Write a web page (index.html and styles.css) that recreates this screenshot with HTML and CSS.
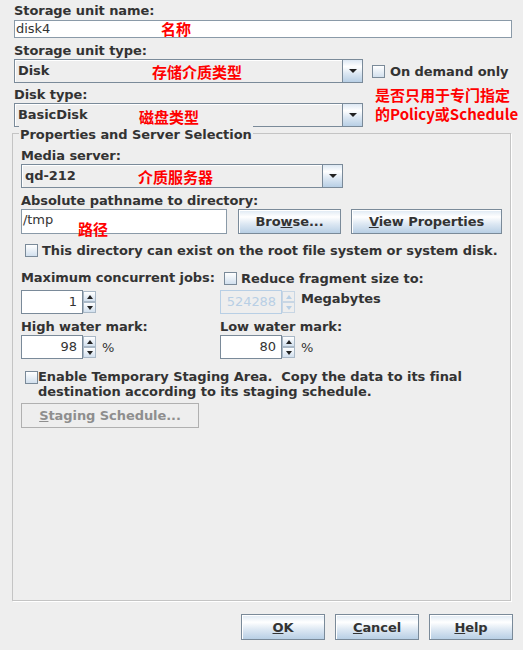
FILE: index.html
```html
<!DOCTYPE html>
<html lang="en">

<head>
    <meta charset="UTF-8">
    <meta name="viewport" content="width=device-width, initial-scale=1.0">
    <title>Storage Unit</title>
    <link rel="stylesheet" href="styles.css">
</head>

<body>
    <div class="dialog">
        <div class="field-label first-label">Storage unit name:</div>
        <div class="text-field name-field">disk4</div>

        <div class="field-label gap-5">Storage unit type:</div>
        <div class="combo-row">
            <div class="combo combo-wide">
                <span class="combo-value">Disk</span>
                <span class="combo-arrow"></span>
            </div>
            <div class="check demand-check"><span class="box"></span>On demand only</div>
        </div>

        <div class="field-label gap-4">Disk type:</div>
        <div class="combo combo-wide">
            <span class="combo-value">BasicDisk</span>
            <span class="combo-arrow"></span>
        </div>

        <fieldset class="group">
            <legend>Properties and Server Selection</legend>

            <div class="field-label gap-5">Media server:</div>
            <div class="combo combo-media">
                <span class="combo-value">qd-212</span>
                <span class="combo-arrow"></span>
            </div>

            <div class="field-label gap-5">Absolute pathname to directory:</div>
            <div class="path-row">
                <div class="text-field path-field">/tmp</div>
                <button class="btn browse-btn">Bro<u>w</u>se...</button>
                <button class="btn view-btn"><u>V</u>iew Properties</button>
            </div>

            <div class="check root-check"><span class="box"></span>This directory can exist on the root file system or system disk.</div>

            <div class="limits">
                <div class="field-label">Maximum concurrent jobs:</div>
                <div class="check reduce-check"><span class="box"></span>Reduce fragment size to:</div>

                <div class="spin-row">
                    <div class="spinner">
                        <div class="spin-field">1</div>
                        <div class="spin-buttons">
                            <span class="spin-btn up"></span>
                            <span class="spin-btn down"></span>
                        </div>
                    </div>
                </div>
                <div class="spin-row">
                    <div class="spinner disabled">
                        <div class="spin-field">524288</div>
                        <div class="spin-buttons">
                            <span class="spin-btn up"></span>
                            <span class="spin-btn down"></span>
                        </div>
                    </div>
                    <span class="unit unit-top">Megabytes</span>
                </div>

                <div class="field-label water-label">High water mark:</div>
                <div class="field-label water-label">Low water mark:</div>

                <div class="spin-row">
                    <div class="spinner">
                        <div class="spin-field">98</div>
                        <div class="spin-buttons">
                            <span class="spin-btn up"></span>
                            <span class="spin-btn down"></span>
                        </div>
                    </div>
                    <span class="unit">%</span>
                </div>
                <div class="spin-row">
                    <div class="spinner">
                        <div class="spin-field">80</div>
                        <div class="spin-buttons">
                            <span class="spin-btn up"></span>
                            <span class="spin-btn down"></span>
                        </div>
                    </div>
                    <span class="unit">%</span>
                </div>
            </div>

            <div class="staging-row">
                <span class="box"></span>
                <span class="staging-text">Enable Temporary Staging Area.&nbsp; Copy the data to its final<br>destination according to its staging schedule.</span>
            </div>
            <button class="btn staging-btn" disabled><u>S</u>taging Schedule...</button>
        </fieldset>

        <div class="button-bar">
            <button class="btn bar-btn"><u>O</u>K</button>
            <button class="btn bar-btn"><u>C</u>ancel</button>
            <button class="btn bar-btn"><u>H</u>elp</button>
        </div>

        <div class="note note-name">名称</div>
        <div class="note note-type">存储介质类型</div>
        <div class="note note-demand">是否只用于专门指定</div>
        <div class="note note-policy">的Policy或Schedule</div>
        <div class="note note-disk">磁盘类型</div>
        <div class="note note-media">介质服务器</div>
        <div class="note note-path">路径</div>
    </div>
</body>

</html>
```

FILE: styles.css
```css
* {
    box-sizing: border-box;
}

body {
    margin: 0;
    background-color: #eeeeee;
    font-family: "DejaVu Sans", sans-serif;
    font-size: 13px;
    letter-spacing: -0.07px;
    color: #333333;
}

.dialog {
    position: relative;
    height: 650px;
    display: flex;
    flex-direction: column;
    padding: 0 0 10px 14px;
}

.field-label {
    font-weight: bold;
    height: 16px;
    line-height: 16px;
    white-space: nowrap;
}

.first-label {
    margin-top: 3px;
}

.gap-4 {
    margin-top: 4px;
}

.gap-5 {
    margin-top: 5px;
}

.text-field {
    background-color: #ffffff;
    border: 1px solid #8a9aa8;
    padding-left: 1px;
}

.name-field {
    width: 498px;
    height: 18px;
    line-height: 16px;
    margin-top: 1px;
}

/* combo boxes */
.combo {
    display: flex;
    height: 24px;
    border: 1px solid #7a8a99;
    background-color: #eeeeee;
}

.combo-wide {
    width: 349px;
}

.combo-media {
    width: 322px;
}

.combo-value {
    flex: 1;
    font-weight: bold;
    line-height: 22px;
    padding-left: 3px;
    box-shadow: inset 1px 1px 0 #ffffff;
}

.combo-arrow {
    width: 20px;
    border-left: 1px solid #7a8a99;
    background: linear-gradient(#dde8f3 0%, #ffffff 30%, #dde8f3 60%, #b8cfe5 100%);
    display: flex;
    align-items: center;
    justify-content: center;
}

.combo-arrow::before {
    content: "";
    border-left: 4px solid transparent;
    border-right: 4px solid transparent;
    border-top: 4px solid #222222;
}

.combo-row {
    display: flex;
    align-items: center;
}

/* check boxes */
.check {
    display: flex;
    align-items: center;
    gap: 4px;
    font-weight: bold;
    height: 16px;
    white-space: nowrap;
}

.box {
    flex: none;
    width: 13px;
    height: 13px;
    border: 1px solid #7a8a99;
    background: linear-gradient(#ffffff, #d2e0ee);
}

.demand-check {
    margin-left: 9px;
    gap: 5px;
}

/* group */
.group {
    flex: 1;
    min-height: 0;
    width: 498px;
    margin: -3px 0 0 -2px;
    padding: 0 8px;
    border: 1px solid #c4c4c4;
    box-shadow: 1px 1px 0 #ffffff;
}

.group legend {
    font-weight: bold;
    line-height: 16px;
    padding: 3px 1px 0;
    margin-left: -2px;
    background-color: #eeeeee;
}

.path-row {
    display: flex;
    height: 25px;
}

.path-field {
    width: 206px;
    height: 25px;
    line-height: 20px;
}

.btn {
    font-family: "DejaVu Sans", sans-serif;
    font-size: 13px;
    font-weight: bold;
    letter-spacing: -0.07px;
    color: #333333;
    padding: 0;
    border: 1px solid #7a8a99;
    background: linear-gradient(#dde8f3 0%, #ffffff 30%, #dde8f3 60%, #b8cfe5 100%);
    box-shadow: inset 1px 1px 0 #ffffff;
}

.browse-btn {
    width: 103px;
    margin-left: 11px;
}

.view-btn {
    width: 151px;
    margin-left: 10px;
}

.root-check {
    margin: 8px 0 0 4px;
}

/* jobs and water marks */
.limits {
    display: grid;
    grid-template-columns: 199px 1fr;
    margin-top: 12px;
}

.reduce-check {
    margin-left: 4px;
}

.spin-row {
    display: flex;
    align-items: center;
    margin-top: 4px;
}

.water-label {
    margin-top: 5px;
}

.water-label + .water-label + .spin-row,
.water-label + .water-label + .spin-row + .spin-row {
    margin-top: 0;
}

.spinner {
    display: flex;
    width: 75px;
    height: 24px;
}

.spin-field {
    width: 62px;
    background-color: #ffffff;
    border: 1px solid #7a8a99;
    text-align: right;
    padding-right: 5px;
    line-height: 22px;
}

.spin-buttons {
    width: 13px;
    display: flex;
    flex-direction: column;
    justify-content: space-between;
    padding: 1px 0;
}

.spin-btn {
    height: 11px;
    border: 1px solid #a9b8c6;
    background: linear-gradient(#ffffff, #d2e0ee);
    display: flex;
    align-items: center;
    justify-content: center;
}

.spin-btn::before {
    content: "";
    border-left: 3px solid transparent;
    border-right: 3px solid transparent;
}

.up::before {
    border-bottom: 4px solid #222222;
}

.down::before {
    border-top: 4px solid #222222;
}

.spinner.disabled .spin-field {
    background-color: #eeeeee;
    border-color: #b8cfe5;
    color: #b8cfe5;
}

.spinner.disabled .spin-btn {
    border-color: #c8d6e4;
    background: #eeeeee;
}

.spinner.disabled .up::before {
    border-bottom-color: #b8cfe5;
}

.spinner.disabled .down::before {
    border-top-color: #b8cfe5;
}

.unit {
    margin-left: 6px;
}

.unit-top {
    align-self: flex-start;
    font-weight: bold;
    line-height: 16px;
    margin-top: 1px;
}

/* staging */
.staging-row {
    display: flex;
    align-items: flex-start;
    margin: 10px 0 0 4px;
    font-weight: bold;
    line-height: 15px;
    white-space: nowrap;
}

.staging-row .box {
    margin-top: 2px;
}

.staging-btn {
    display: block;
    width: 178px;
    height: 25px;
    margin-top: 4px;
    color: #8e8e8e;
    border-color: #b0b0b0;
    background: #eeeeee;
    box-shadow: none;
}

/* bottom buttons */
.button-bar {
    display: flex;
    justify-content: flex-end;
    gap: 10px;
    margin-top: 13px;
    padding-right: 10px;
}

.bar-btn {
    width: 84px;
    height: 26px;
}

/* red annotations */
.note {
    position: absolute;
    color: #ff0000;
    font-family: "Noto Sans CJK SC", sans-serif;
    font-size: 15px;
    font-weight: bold;
    line-height: 1;
    letter-spacing: 0;
    white-space: nowrap;
}

.note-name {
    left: 161px;
    top: 21px;
}

.note-type {
    left: 152px;
    top: 64px;
}

.note-demand {
    left: 375px;
    top: 87px;
}

.note-policy {
    left: 375px;
    top: 106px;
}

.note-disk {
    left: 139px;
    top: 109px;
}

.note-media {
    left: 138px;
    top: 169px;
}

.note-path {
    left: 78px;
    top: 221px;
}
```
